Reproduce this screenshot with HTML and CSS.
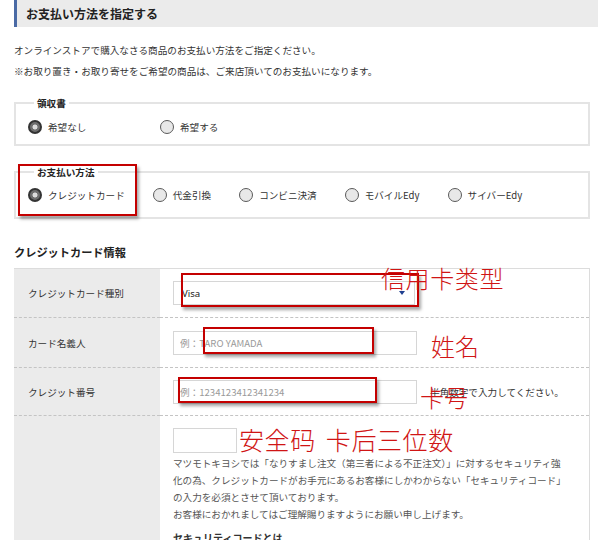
FILE: index.html
```html
<!DOCTYPE html>
<html lang="ja">
<head>
<meta charset="utf-8">
<title>お支払い方法を指定する</title>
<link rel="stylesheet" href="styles.css">
</head>
<body>
<div class="page">
  <h2 class="section-title">お支払い方法を指定する</h2>
  <p class="intro">オンラインストアで購入なさる商品のお支払い方法をご指定ください。<br>※お取り置き・お取り寄せをご希望の商品は、ご来店頂いてのお支払いになります。</p>

  <fieldset class="group group-receipt">
    <legend>領収書</legend>
    <div class="options">
      <label class="option"><input type="radio" name="receipt" class="radio" checked>希望なし</label>
      <label class="option"><input type="radio" name="receipt" class="radio">希望する</label>
    </div>
  </fieldset>

  <fieldset class="group group-pay">
    <legend>お支払い方法</legend>
    <div class="options">
      <label class="option"><input type="radio" name="pay" class="radio" checked>クレジットカード</label>
      <label class="option"><input type="radio" name="pay" class="radio">代金引換</label>
      <label class="option"><input type="radio" name="pay" class="radio">コンビニ決済</label>
      <label class="option"><input type="radio" name="pay" class="radio">モバイルEdy</label>
      <label class="option"><input type="radio" name="pay" class="radio">サイバーEdy</label>
    </div>
  </fieldset>

  <h3 class="sub-title">クレジットカード情報</h3>
  <div class="card-table">
    <div class="th">クレジットカード種別</div>
    <div class="td">
      <div class="select-wrap">
        <select class="select"><option>Visa</option></select>
        <span class="arrow"></span>
      </div>
    </div>

    <div class="th">カード名義人</div>
    <div class="td"><input type="text" class="field" placeholder="例：TARO YAMADA"></div>

    <div class="th">クレジット番号</div>
    <div class="td"><input type="text" class="field" placeholder="例：1234123412341234"><span class="hint">半角数字で入力してください。</span></div>

    <div class="th"></div>
    <div class="td td-code">
      <input type="text" class="field field-code">
      <p class="code-note">マツモトキヨシでは「なりすまし注文（第三者による不正注文）」に対するセキュリティ強<br>化の為、クレジットカードがお手元にあるお客様にしかわからない「セキュリティコード」<br>の入力を必須とさせて頂いております。<br>お客様におかれましてはご理解賜りますようにお願い申し上げます。</p>
      <p class="code-title">セキュリティコードとは</p>
    </div>
  </div>

  <div class="mark mark-pay"></div>
  <div class="mark mark-type"></div>
  <div class="mark mark-name"></div>
  <div class="mark mark-number"></div>

  <span class="note note-type">信用卡类型</span>
  <span class="note note-name">姓名</span>
  <span class="note note-number">卡号</span>
  <span class="note note-code">安全码<span class="sp"></span>卡后三位数</span>
</div>
</body>
</html>
```
FILE: styles.css
```css
html { overflow: hidden; }
body {
  margin: 0;
  background: #fff;
  color: #333;
  font-family: "Noto Sans CJK JP", "Noto Sans", sans-serif;
  font-size: 9.6px;
}
.page {
  position: relative;
  width: 598px;
  height: 540px;
  box-sizing: border-box;
  padding: 0 8px 0 14px;
  overflow: hidden;
}
.section-title {
  margin: 0 -8px 0 0;
  height: 27px;
  background: #ebebeb;
  border-left: 3px solid #4a6aa5;
  padding-left: 9px;
  font-size: 12px;
  font-weight: bold;
  line-height: 27px;
  color: #222;
}
.intro {
  margin: 13px 0 0;
  line-height: 21px;
}
.group {
  margin: 14px 0 0;
  padding: 10px 12px 10px;
  border: 2px solid #e4e4e4;
  min-width: 0;
}
.group legend {
  margin-left: 6px;
  padding: 0 3px;
  font-weight: bold;
  line-height: 14px;
  color: #222;
}
.group-pay {
  margin-top: 19px;
  padding-top: 9px;
  padding-bottom: 15px;
}
.options {
  display: flex;
  align-items: center;
  gap: 28px;
}
.group-receipt .options { gap: 0; }
.group-receipt .option { width: 132px; }
.option {
  display: flex;
  align-items: center;
  gap: 6px;
  line-height: 14px;
  color: #333;
}
.radio {
  appearance: none;
  -webkit-appearance: none;
  margin: 0;
  width: 14px;
  height: 14px;
  box-sizing: border-box;
  border-radius: 50%;
  border: 1px solid #5a5a5a;
  background: #e8e8e8;
  flex: none;
}
.radio:checked {
  border: 2px solid #333;
  background: radial-gradient(circle, #dcdcdc 0 2.2px, #6e6e6e 2.8px 100%);
}
.sub-title {
  margin: 25px 0 8px;
  font-size: 11.2px;
  font-weight: bold;
  line-height: 16px;
  color: #222;
}
.card-table {
  display: grid;
  grid-template-columns: 146px 1fr;
  grid-template-rows: 49px 50px 48px auto;
  border-top: 1px solid #dcdcdc;
  border-right: 1px solid #dcdcdc;
  height: 280px;
}
.th, .td {
  box-sizing: border-box;
  display: flex;
  align-items: center;
  border-bottom: 1px dashed #c4c4c4;
}
.th {
  background: #ebebeb;
  padding-left: 14px;
  color: #333;
}
.td { padding-left: 13px; }
.select-wrap { position: relative; }
.select {
  appearance: none;
  -webkit-appearance: none;
  width: 242px;
  height: 24px;
  box-sizing: border-box;
  border: 1px solid #d6d6d6;
  border-radius: 0;
  background: #fff;
  padding: 0 0 0 8px;
  font-family: "Noto Sans", "Noto Sans CJK JP", sans-serif;
  font-size: 9.6px;
  color: #222;
  outline: none;
}
.arrow {
  position: absolute;
  left: 226px;
  top: 10px;
  width: 0;
  height: 0;
  border-left: 3px solid transparent;
  border-right: 3px solid transparent;
  border-top: 4px solid #1f3f8f;
}
.field {
  width: 244px;
  height: 24px;
  box-sizing: border-box;
  border: 1px solid #d6d6d6;
  border-radius: 0;
  padding: 0 6px;
  margin: 0;
  font-family: inherit;
  font-size: 9.6px;
  color: #333;
  outline: none;
}
.field::placeholder { color: #9a9a9a; }
.hint { margin-left: 13px; color: #333; }
.td-code {
  flex-direction: column;
  align-items: flex-start;
  padding-top: 12px;
  border-bottom: none;
}
.th:nth-last-child(2) { border-bottom: none; }
.field-code { width: 64px; height: 25px; }
.code-note {
  margin: 2px 0 0;
  line-height: 17px;
  color: #555;
  white-space: nowrap;
}
.code-title {
  margin: 6px 0 0;
  line-height: 17px;
  font-size: 10px;
  font-weight: bold;
  color: #333;
}
.mark {
  position: absolute;
  box-sizing: border-box;
  border: 2px solid #c40000;
  box-shadow: 2px 3px 3px rgba(0, 0, 0, 0.35);
}
.mark-pay { left: 18px; top: 164px; width: 119px; height: 52px; }
.mark-type { left: 181px; top: 273px; width: 238px; height: 34px; }
.mark-name { left: 203px; top: 327px; width: 171px; height: 27px; }
.mark-number { left: 178px; top: 377px; width: 199px; height: 26px; }
.note {
  position: absolute;
  font-family: "Noto Sans CJK SC", "Noto Sans CJK JP", sans-serif;
  font-weight: 300;
  font-size: 24px;
  line-height: 24px;
  color: #d01515;
  white-space: nowrap;
}
.note-type { left: 381px; top: 266px; letter-spacing: 0.6px; }
.note-name { left: 431px; top: 334px; }
.note-number { left: 420px; top: 385px; }
.note-code { left: 239px; top: 427px; font-size: 25px; line-height: 25px; letter-spacing: 0.6px; }
.note-code .sp { display: inline-block; width: 10px; }
```
